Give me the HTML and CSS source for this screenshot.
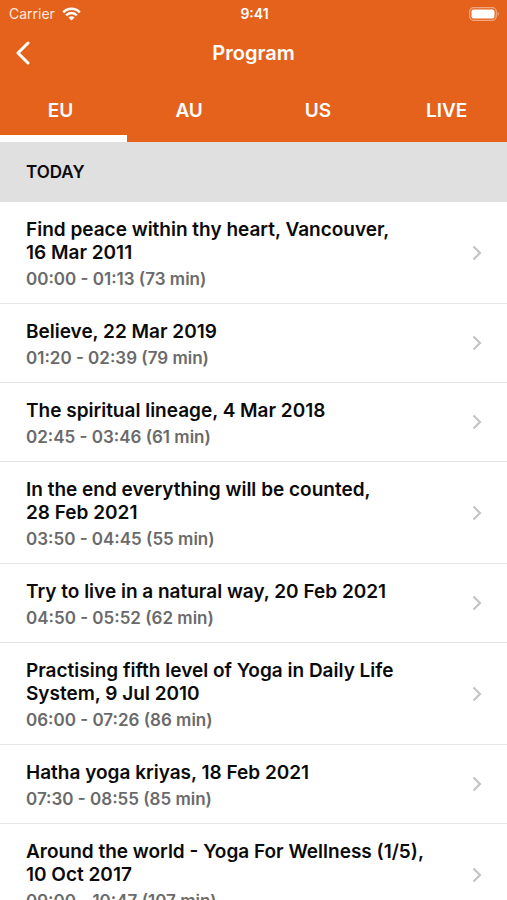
FILE: index.html
```
<!DOCTYPE html>
<html lang="en">
<head>
	<meta charset="utf-8">
	<meta name="viewport" content="width=device-width, initial-scale=1">
	<title>Program</title>
	<link rel="stylesheet" href="styles.css">
</head>

<body>
	<!-- chevron shared by all rows -->
	<svg class="defs" aria-hidden="true">
		<symbol id="chevron" viewBox="0 0 10 16">
			<path d="M1.5 1.5 L8 8 L1.5 14.5" fill="none" stroke="currentColor" stroke-width="2.2"/>
		</symbol>
	</svg>

	<header class="top">
		<div class="status">
			<span class="carrier">Carrier
				<svg class="wifi" viewBox="0 0 20 14" aria-hidden="true">
					<g fill="none" stroke="#fff" stroke-width="2.6">
						<path d="M1.3 5.2 C6 .2 14 .2 18.7 5.2"/>
						<path d="M4.4 8.4 C7.5 5.2 12.5 5.2 15.6 8.4"/>
					</g>
					<path d="M6.8 10.6 C8.7 8.9 11.3 8.9 13.2 10.6 L10 13.8 Z" fill="#fff"/>
				</svg>
			</span>
			<span class="clock">9:41</span>
			<svg class="battery" viewBox="0 0 31 14" aria-hidden="true">
				<rect x=".7" y=".7" width="26.6" height="12.6" rx="4" fill="none" stroke="#fff" stroke-opacity=".45" stroke-width="1.2"/>
				<rect x="2.5" y="2.5" width="23" height="9" rx="2" fill="#fff"/>
				<path d="M28.7 4.8 Q30.8 7 28.7 9.2 Z" fill="#fff" fill-opacity=".5"/>
			</svg>
		</div>
		<div class="navbar">
			<button class="back" type="button" aria-label="Back">
				<svg viewBox="0 0 16 24" aria-hidden="true">
					<path d="M13 2 L3 12 L13 22" fill="none" stroke="#fff" stroke-width="3" stroke-linecap="round" stroke-linejoin="round"/>
				</svg>
			</button>
			<h1>Program</h1>
		</div>
		<nav class="tabs">
			<div class="tab-row">
				<button type="button" aria-current="true">EU</button>
				<button type="button">AU</button>
				<button type="button">US</button>
				<button type="button">LIVE</button>
			</div>
		</nav>
	</header>

	<main class="program">
		<h2>TODAY</h2>
		<ul>
			<li><a href="#">
				<div class="text">
					<h3>Find peace within thy heart, Vancouver,<br>16 Mar 2011</h3>
					<p>00:00 - 01:13 (73 min)</p>
				</div>
				<svg class="chevron"><use href="#chevron"/></svg>
			</a></li>
			<li><a href="#">
				<div class="text">
					<h3>Believe, 22 Mar 2019</h3>
					<p>01:20 - 02:39 (79 min)</p>
				</div>
				<svg class="chevron"><use href="#chevron"/></svg>
			</a></li>
			<li><a href="#">
				<div class="text">
					<h3>The spiritual lineage, 4 Mar 2018</h3>
					<p>02:45 - 03:46 (61 min)</p>
				</div>
				<svg class="chevron"><use href="#chevron"/></svg>
			</a></li>
			<li><a href="#">
				<div class="text">
					<h3>In the end everything will be counted,<br>28 Feb 2021</h3>
					<p>03:50 - 04:45 (55 min)</p>
				</div>
				<svg class="chevron"><use href="#chevron"/></svg>
			</a></li>
			<li><a href="#">
				<div class="text">
					<h3>Try to live in a natural way, 20 Feb 2021</h3>
					<p>04:50 - 05:52 (62 min)</p>
				</div>
				<svg class="chevron"><use href="#chevron"/></svg>
			</a></li>
			<li><a href="#">
				<div class="text">
					<h3>Practising fifth level of Yoga in Daily Life<br>System, 9 Jul 2010</h3>
					<p>06:00 - 07:26 (86 min)</p>
				</div>
				<svg class="chevron"><use href="#chevron"/></svg>
			</a></li>
			<li><a href="#">
				<div class="text">
					<h3>Hatha yoga kriyas, 18 Feb 2021</h3>
					<p>07:30 - 08:55 (85 min)</p>
				</div>
				<svg class="chevron"><use href="#chevron"/></svg>
			</a></li>
			<li><a href="#">
				<div class="text">
					<h3>Around the world - Yoga For Wellness (1/5),<br>10 Oct 2017</h3>
					<p>09:00 - 10:47 (107 min)</p>
				</div>
				<svg class="chevron"><use href="#chevron"/></svg>
			</a></li>
		</ul>
	</main>
</body>
</html>
```
FILE: styles.css
```
* {box-sizing: border-box;}

body {
	display: flex;
	flex-direction: column;
	height: 100vh;
	margin: 0;
	background: #fff;
	color: #0b0b0b;
	font-family: Inter, "Liberation Sans", sans-serif;
}

h1, h2, h3, p, ul {margin: 0; padding: 0;}
ul {list-style: none;}
button {
	border: 0;
	padding: 0;
	background: none;
	color: inherit;
	font: inherit;
}
.defs {position: absolute; width: 0; height: 0;}

/* orange header */
.top {
	flex: none;
	background: #e5621d;
	color: #fff;
}

.status {
	display: grid;
	grid-template-columns: 1fr auto 1fr;
	align-items: center;
	height: 27px;
	padding: 0 7px 0 9px;
	font-size: 14px;
}
.carrier {display: flex; align-items: center; gap: 7px; color: #ffe9dc;}
.wifi {width: 19px; height: 14px;}
.clock {font-weight: 600;}
.battery {justify-self: end; width: 31px; height: 14px;}

.navbar {
	display: grid;
	grid-template-columns: 48px 1fr 48px;
	align-items: center;
	height: 51px;
}
.back {
	display: flex;
	align-items: center;
	height: 48px;
	padding-left: 15px;
}
.back svg {width: 16px; height: 24px;}
h1 {
	font-size: 20px;
	font-weight: 600;
	text-align: center;
}

.tabs {overflow: hidden;}
.tab-row {
	display: grid;
	grid-template-columns: repeat(4, 1fr);
	height: 57px;
	margin: 0 -4px;
	padding-top: 8px;
	font-size: 19px;
	font-weight: 600;
}
/* bar under the selected tab */
.tabs::after {
	content: "";
	display: block;
	width: 25%;
	height: 7px;
	background: #fff;
}

/* list */
.program {
	flex: 1;
	min-height: 0;
	overflow-y: auto;
	scrollbar-width: none;
}
h2 {
	height: 60px;
	padding: 0 26px;
	background: #e0e0e0;
	font-size: 17px;
	font-weight: 600;
	line-height: 60px;
}
li {border-bottom: 1px solid #e6e6e6;}
li a {
	display: flex;
	align-items: center;
	justify-content: space-between;
	padding: 0 25px 0 26px;
	color: inherit;
	text-decoration: none;
}
.text {padding: 16px 0 12px;}
h3 {
	font-size: 19px;
	font-weight: 600;
	line-height: 23px;
}
.text p {
	margin-top: 3px;
	color: #6a6a6a;
	font-size: 17px;
	font-weight: 600;
	line-height: 24px;
}
.chevron {
	flex: none;
	width: 10px;
	height: 16px;
	color: #c4c4c4;
}
```
